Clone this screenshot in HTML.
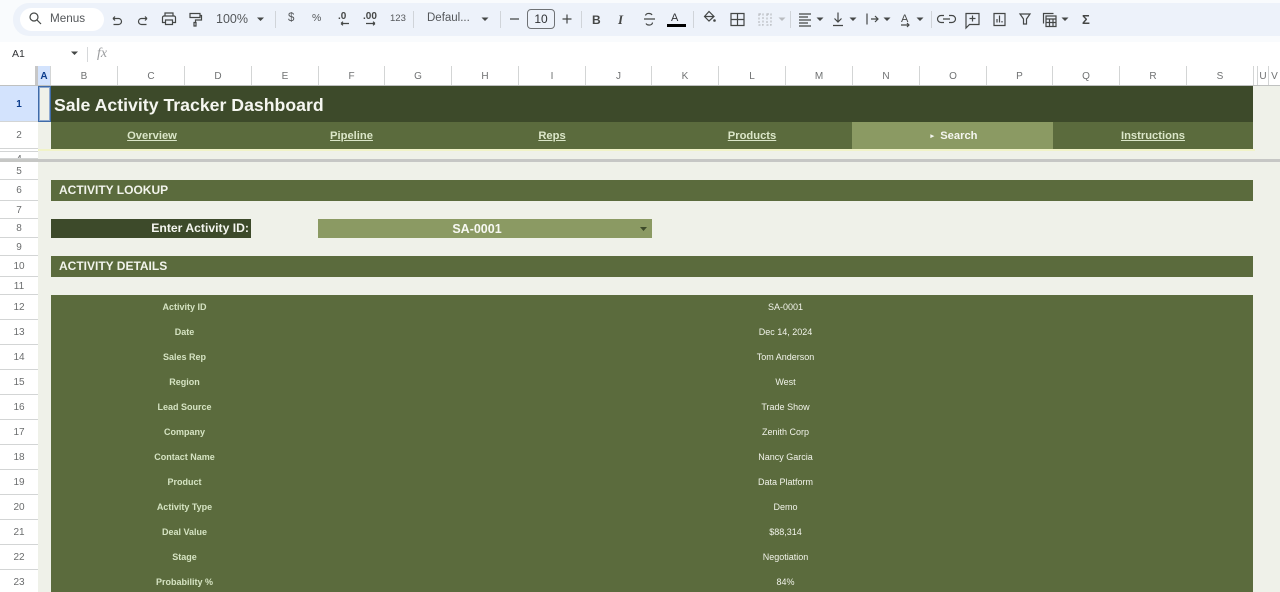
<!DOCTYPE html>
<html><head><meta charset="utf-8"><style>
html,body{margin:0;padding:0;width:1280px;height:592px;overflow:hidden}
body{position:relative;background:#eff1e9;font-family:"Liberation Sans",sans-serif}
div{position:absolute;box-sizing:border-box}
#root{left:0;top:0;width:1280px;height:592px;overflow:hidden;background:#eff1e9}
.t{white-space:nowrap;color:#454746;line-height:16px}
.c{top:66px;height:20px;border-right:1px solid #d3d5d5;background:#fff;text-align:center;font-size:10px;line-height:21px;color:#6f7172}
.r{left:0;width:38px;background:#fff;border-bottom:1px solid #d3d5d5;text-align:center;font-size:10px;color:#6b6d6e;display:flex;align-items:center;justify-content:center;padding-top:1px}
.n{top:122px;height:27px;line-height:28px;text-align:center;color:#dbe6c8;font-size:11.2px;font-weight:bold;text-decoration:underline;background:#5b6b3d}
.b{left:51px;width:1202px;background:#5b6b3d;color:#f2f4ec;font-weight:bold;font-size:12px;padding-left:8px;white-space:nowrap}
.l{left:51px;width:267px;height:25px;line-height:25px;text-align:center;font-size:9px;font-weight:bold;color:#d5e3c2}
.v{left:318px;width:935px;height:25px;line-height:25px;text-align:center;font-size:9px;color:#f1f3ea}
</style></head><body><div id="root">

<div style="left:0;top:0;width:1280px;height:42px;background:#f9fbfd"></div>
<div style="left:13px;top:3px;width:1267px;height:33px;background:#edf2fa;border-radius:16px 0 0 16px"></div>
<div style="left:20px;top:8px;width:84px;height:23px;background:#fff;border-radius:12px"></div>
<div style="left:0;top:42px;width:1280px;height:24px;background:#fff"></div>

<div class="t" style="left:50px;top:11px;font-size:11.7px;color:#54575a">Menus</div>
<div class="t" style="left:216px;top:11px;font-size:12.5px;color:#54575a">100%</div>
<div class="t" style="left:288px;top:10px;font-size:11.5px;color:#54575a">$</div>
<div class="t" style="left:312px;top:10px;font-size:10.5px;color:#54575a">%</div>
<div class="t" style="left:338px;top:9px;font-size:10px;font-weight:bold">.0</div>
<div class="t" style="left:363px;top:9px;font-size:10px;font-weight:bold">.00</div>
<div class="t" style="left:390px;top:11px;font-size:9.5px;color:#54575a">123</div>
<div class="t" style="left:427px;top:10px;font-size:11.5px;color:#54575a">Defaul...</div>
<div style="left:527px;top:9px;width:28px;height:20px;border:1px solid #6f7275;border-radius:4px;text-align:center;font-size:12px;line-height:18px;color:#303235">10</div>
<div class="t" style="left:592px;top:12px;font-size:12px;font-weight:bold">B</div>
<div class="t" style="left:618px;top:12px;font-size:13px;font-weight:bold;font-style:italic;font-family:'Liberation Serif',serif">I</div>
<div class="t" style="left:671px;top:10px;font-size:11px;color:#303235">A</div>
<div style="left:667px;top:24px;width:19px;height:3px;background:#000"></div>
<div class="t" style="left:901px;top:11px;font-size:11px">A</div>
<div class="t" style="left:1082px;top:12px;font-size:13px;font-weight:bold">Σ</div>
<div class="t" style="left:12px;top:46px;font-size:10.5px;color:#303235">A1</div>
<div class="t" style="left:97px;top:46px;font-size:14px;font-style:italic;color:#9a9c9e;font-family:'Liberation Serif',serif">fx</div>

<svg width="1280" height="66" viewBox="0 0 1280 66" style="position:absolute;left:0;top:0" fill="none" stroke="#444746" stroke-width="1.2">
<circle cx="34" cy="17" r="4"/><path d="M37 20l4 4"/>
<path d="M113 18.500h5.500a3 3 0 0 1 0 6h-5M113 18.500l2-2M113 18.500l2 2"/>
<path d="M147 18.500h-5.500a3 3 0 0 0 0 6h5M147 18.500l-2-2M147 18.500l-2 2"/>
<path d="M165 16v-3h8v3M165 22.500h-2.500v-5a1.500 1.500 0 0 1 1.500-1.500h10a1.500 1.500 0 0 1 1.500 1.500v5h-2.500M165.500 20h7v4.500h-7z"/>
<path d="M190 13.500h10v4h-10zM200 15.500h1.500v4.500h-6v2.500M194 22.500h2v3.500h-2z"/>
<path d="M341 23.500h8M341 23.500l2-1.800M341 23.500l2 1.800M366 23.500h9M375 23.500l-2-1.800M375 23.500l-2 1.800"/>
<path d="M510 19h9M562.500 19h9M567 14.500v9"/>
<path d="M644 19h11M645.500 15.500a3 2.500 0 0 1 3.500-2 3 2.500 0 0 1 3 1.500M652.500 22.500a3 2.500 0 0 1-3.500 2.500 3 2.500 0 0 1-3-1.500"/>
<path d="M709 11.500l-4.500 5 4.500 4.500 5-4.500zM704.500 16.500h9.500"/>
<path d="M731 13.500h13v12h-13zM737.500 13.500v12M731 19.500h13"/>
<path stroke="#b9bcc0" stroke-dasharray="2 1.500" d="M759 14h4v11h-4zM767 14h4v11h-4z"/>
<path d="M799 14h12M799 17h9M799 20h12M799 23h9M799 26h12"/>
<path d="M838 12.500v9M834.500 18.500l3.500 3.500 3.500-3.500M833 25.500h10"/>
<path d="M867 13.500v11M871 19h7M875 16l3 3-3 3"/>
<path d="M901 25h8M907 23l2 2-2 2"/>
<path d="M944 15.500h-3a3.500 3.500 0 0 0 0 7h3M949 15.500h3a3.500 3.500 0 0 1 0 7h-3M943 19h7"/>
<path d="M966 13.500h13v11h-9.500l-3.500 3.500zM972.500 15.500v6M969.500 18.500h6"/>
<path d="M994 13.500h11v12h-11zM997 22.500v-3.500M999.500 22.500v-7M1002 22.500v-1.500"/>
<path d="M1020 14h10l-3.500 5v5h-3v-5z"/>
<path d="M1043.500 23.500v-10h10M1046 16h10v10.500h-10zM1046 19h10M1046 22.500h10M1049.500 19v7.500M1053 19v7.500"/>
<g stroke="#d0d4d9" stroke-width="1"><path d="M275.500 11v17M413.500 11v17M500.500 11v17M581.500 11v17M693.500 11v17M790.500 11v17M931.500 11v17"/></g>
<path stroke="#d6d8da" stroke-width="1" d="M87.500 47v15"/>
<g fill="#444746" stroke="none">
<path d="M257 17.500h7l-3.500 3.500zM481.500 17.500h7l-3.500 3.500zM816.500 17.500h7l-3.500 3.500zM849.500 17.500h7l-3.500 3.500zM883.500 17.500h7l-3.500 3.500zM916.500 17.500h7l-3.500 3.500zM1061.500 17.500h7l-3.500 3.500zM71 51.500h7l-3.500 3.500z"/>
<circle cx="714.500" cy="20.500" r="1.300"/>
<path fill="#b9bcc0" d="M778.500 17.500h7l-3.500 3.500z"/></g>
</svg>

<div style="left:0;top:66px;width:38px;height:20px;background:#fff;border-bottom:1px solid #d3d5d5;border-right:3px solid #c7c7c7"></div>
<div class="c" style="left:38px;width:13px;background:#d3e3fd;color:#0b3c8c;font-weight:bold">A</div>
<div class="c" style="left:51px;width:67px">B</div>
<div class="c" style="left:118px;width:67px">C</div>
<div class="c" style="left:185px;width:67px">D</div>
<div class="c" style="left:252px;width:67px">E</div>
<div class="c" style="left:319px;width:66px">F</div>
<div class="c" style="left:385px;width:67px">G</div>
<div class="c" style="left:452px;width:67px">H</div>
<div class="c" style="left:519px;width:67px">I</div>
<div class="c" style="left:586px;width:66px">J</div>
<div class="c" style="left:652px;width:67px">K</div>
<div class="c" style="left:719px;width:67px">L</div>
<div class="c" style="left:786px;width:67px">M</div>
<div class="c" style="left:853px;width:67px">N</div>
<div class="c" style="left:920px;width:67px">O</div>
<div class="c" style="left:987px;width:66px">P</div>
<div class="c" style="left:1053px;width:67px">Q</div>
<div class="c" style="left:1120px;width:67px">R</div>
<div class="c" style="left:1187px;width:67px">S</div>
<div class="c" style="left:1254px;width:4px"></div>
<div class="c" style="left:1258px;width:11px">U</div>
<div class="c" style="left:1269px;width:11px;border-right:0">V</div>
<div style="left:0;top:85px;width:1280px;height:1px;background:#bfc1c0"></div>

<div class="r" style="top:86px;height:36px;background:#d3e3fd;color:#0b3c8c;font-weight:bold">1</div>
<div class="r" style="top:122px;height:27px">2</div>
<div class="r" style="top:149px;height:3px"></div>
<div class="r" style="top:152px;height:7px;overflow:hidden;align-items:flex-start;padding-top:2px">4</div>
<div class="r" style="top:162px;height:18px">5</div>
<div class="r" style="top:180px;height:21px">6</div>
<div class="r" style="top:201px;height:18px">7</div>
<div class="r" style="top:219px;height:19px">8</div>
<div class="r" style="top:238px;height:18px">9</div>
<div class="r" style="top:256px;height:21px">10</div>
<div class="r" style="top:277px;height:18px">11</div>
<div class="r" style="top:295px;height:25px">12</div>
<div class="r" style="top:320px;height:25px">13</div>
<div class="r" style="top:345px;height:25px">14</div>
<div class="r" style="top:370px;height:25px">15</div>
<div class="r" style="top:395px;height:25px">16</div>
<div class="r" style="top:420px;height:25px">17</div>
<div class="r" style="top:445px;height:25px">18</div>
<div class="r" style="top:470px;height:25px">19</div>
<div class="r" style="top:495px;height:25px">20</div>
<div class="r" style="top:520px;height:25px">21</div>
<div class="r" style="top:545px;height:25px">22</div>
<div class="r" style="top:570px;height:25px">23</div>

<div style="left:51px;top:86px;width:1202px;height:36px;background:#3d4a2a"></div>
<div style="left:54px;top:93px;font-size:17.7px;line-height:24px;font-weight:bold;color:#f5f6f0;white-space:nowrap">Sale Activity Tracker Dashboard</div>
<div class="n" style="left:52px;width:200px">Overview</div>
<div class="n" style="left:251px;width:201px">Pipeline</div>
<div class="n" style="left:452px;width:200px">Reps</div>
<div class="n" style="left:652px;width:200px">Products</div>
<div class="n" style="left:852px;width:201px;background:#8b9a63;color:#f5f6f0;text-decoration:none;padding-left:3px"><span style="font-size:7px;vertical-align:1px">▸</span>&nbsp; Search</div>
<div class="n" style="left:1053px;width:200px">Instructions</div>
<div style="left:51px;top:122px;width:1px;height:27px;background:#5b6b3d"></div>
<div style="left:38px;top:149px;width:1217px;height:2px;background:#f1f3c8"></div>
<div style="left:38px;top:86px;width:13px;height:36px;border:1px solid #3f6ba8;box-shadow:inset 0 0 0 1px #8faad0"></div>
<div style="left:0;top:159px;width:1280px;height:3px;background:#c6c7c5"></div>

<div class="b" style="top:180px;height:21px;line-height:21px">ACTIVITY LOOKUP</div>
<div style="left:51px;top:219px;width:200px;height:19px;background:#3d4a2a;color:#f5f6f0;font-size:12.2px;font-weight:bold;line-height:19px;text-align:right;padding-right:2px">Enter Activity ID:</div>
<div style="left:318px;top:219px;width:334px;height:19px;background:#8b9a63;color:#f7f8f2;font-size:12.5px;font-weight:bold;line-height:20px;text-align:center;padding-right:16px">SA-0001</div>
<svg width="8" height="5" style="position:absolute;left:640px;top:227px"><path d="M0 0h7l-3.500 4z" fill="#3d4a2a"/></svg>
<div class="b" style="top:256px;height:21px;line-height:21px">ACTIVITY DETAILS</div>
<div style="left:51px;top:295px;width:1202px;height:297px;background:#5b6b3d"></div>

<div class="l" style="top:295px">Activity ID</div><div class="v" style="top:295px">SA-0001</div>
<div class="l" style="top:320px">Date</div><div class="v" style="top:320px">Dec 14, 2024</div>
<div class="l" style="top:345px">Sales Rep</div><div class="v" style="top:345px">Tom Anderson</div>
<div class="l" style="top:370px">Region</div><div class="v" style="top:370px">West</div>
<div class="l" style="top:395px">Lead Source</div><div class="v" style="top:395px">Trade Show</div>
<div class="l" style="top:420px">Company</div><div class="v" style="top:420px">Zenith Corp</div>
<div class="l" style="top:445px">Contact Name</div><div class="v" style="top:445px">Nancy Garcia</div>
<div class="l" style="top:470px">Product</div><div class="v" style="top:470px">Data Platform</div>
<div class="l" style="top:495px">Activity Type</div><div class="v" style="top:495px">Demo</div>
<div class="l" style="top:520px">Deal Value</div><div class="v" style="top:520px">$88,314</div>
<div class="l" style="top:545px">Stage</div><div class="v" style="top:545px">Negotiation</div>
<div class="l" style="top:570px">Probability %</div><div class="v" style="top:570px">84%</div>
</div></body></html>
